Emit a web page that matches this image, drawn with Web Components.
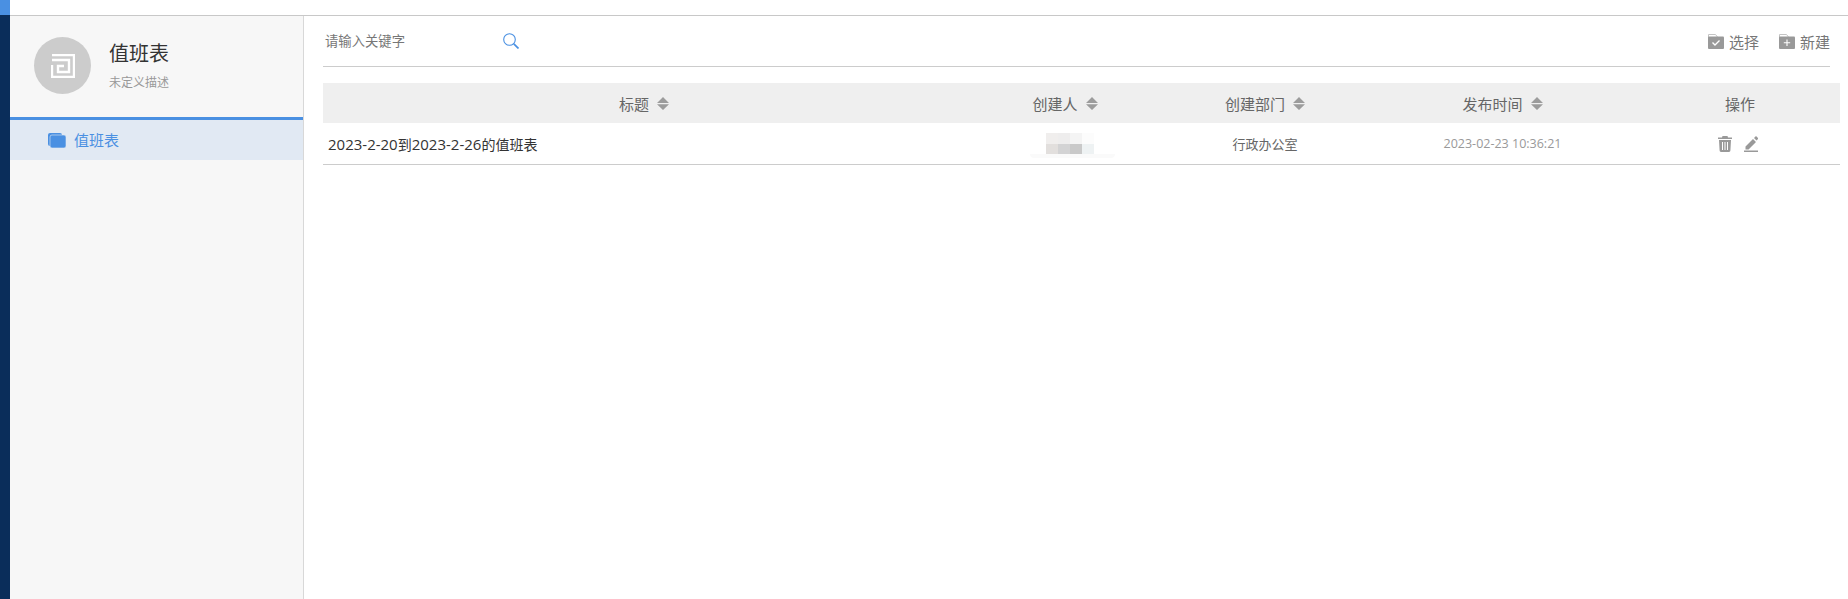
<!DOCTYPE html>
<html lang="zh">
<head>
<meta charset="utf-8">
<title>值班表</title>
<style>
  html, body { margin: 0; height: 100%; overflow: hidden; background: #fff; }
  body { font-family: "Open Sans", "Noto Sans CJK SC", sans-serif; }
</style>
</head>
<body>
<duty-app></duty-app>

<script>
const appTemplate = document.createElement('template');
appTemplate.innerHTML = `
  <style>
    :host { display: flex; height: 599px; }
    .strip { width: 10px; flex: none; background: #0a2d5a; }
    .strip div { height: 15px; background: #4a90e2; }
    .main { flex: 1; display: flex; flex-direction: column; min-width: 0; }
    .top { height: 15px; flex: none; border-bottom: 1px solid #c8c8c8; }
    .body { flex: 1; display: flex; min-height: 0; }
  </style>
  <div class="strip"><div></div></div>
  <div class="main">
    <div class="top"></div>
    <div class="body">
      <duty-sidebar></duty-sidebar>
      <duty-content></duty-content>
    </div>
  </div>
`;

class DutyApp extends HTMLElement {
  connectedCallback() {
    this.attachShadow({ mode: 'open' }).appendChild(appTemplate.content.cloneNode(true));
  }
}

const sidebarTemplate = document.createElement('template');
sidebarTemplate.innerHTML = `
  <style>
    :host { display: block; width: 293px; flex: none; background: #f7f7f7; border-right: 1px solid #d8d8d8; }
    .head { height: 104px; box-sizing: border-box; display: flex; padding: 21px 0 0 24px; border-bottom: 3px solid #4a90e2; }
    .logo { width: 57px; height: 57px; border-radius: 50%; background: #cccccc; display: flex; align-items: center; justify-content: center; flex: none; }
    .info { margin-left: 18px; padding-top: 2px; }
    h1 { margin: 0; font-size: 20px; font-weight: 400; line-height: 30px; color: #333; }
    p { margin: 6px 0 0; font-size: 12px; line-height: 16px; color: #999; }
    .item { height: 40px; background: #e1e9f3; display: flex; align-items: center; padding-left: 38px; color: #4a90e2; font-size: 15px; line-height: 38px; }
    .item svg { margin-right: 8px; }
  </style>
  <div class="head">
    <div class="logo">
      <svg width="24" height="24" viewBox="0 0 24 24" fill="none" stroke="#fff" stroke-width="2.400">
        <path d="M1 1h22v22H1V11M1 6h17v12H7v-6h6"/>
      </svg>
    </div>
    <div class="info">
      <h1>值班表</h1>
      <p>未定义描述</p>
    </div>
  </div>
  <div class="item">
    <svg width="18" height="15" viewBox="0 0 18 15">
      <rect x="0" y="0" width="14" height="13" rx="2" fill="#4a90e2"/>
      <rect x="2" y="2" width="16" height="13" rx="2" fill="#4a90e2" stroke="#e1e9f3" stroke-width=".6"/>
    </svg>
    值班表
  </div>
`;

class DutySidebar extends HTMLElement {
  connectedCallback() {
    this.attachShadow({ mode: 'open' }).appendChild(sidebarTemplate.content.cloneNode(true));
  }
}

const folderBody = `
  <path d="M.5 4V.5h7l2 2.500" fill="none" stroke="#c4c4c4"/>
  <rect x="0" y="2.500" width="16" height="12.500" rx="1" fill="#999"/>`;

const toolbarTemplate = document.createElement('template');
toolbarTemplate.innerHTML = `
  <style>
    :host { display: flex; align-items: center; height: 50px; margin-right: 10px; border-bottom: 1px solid #ccc; font-size: 13.330px; }
    .kw { width: 178px; padding-left: 2px; color: #777; line-height: 50px; height: 50px; }
    .actions { margin-left: auto; display: flex; gap: 20px; color: #777; font-size: 15px; }
    .actions span { display: flex; align-items: center; gap: 5px; }
  </style>
  <span class="kw">请输入关键字</span>
  <svg width="16" height="16" viewBox="0 0 16 16" fill="none" stroke="#4a90e2" stroke-width="1.100"><circle cx="6.500" cy="6.500" r="5.800"/><path d="M10.800 10.800L15.500 15.500" stroke-width="1.700"/></svg>
  <div class="actions">
    <span>
      <svg width="16" height="15" viewBox="0 0 16 15">${folderBody}<path d="M4.500 8.500l2.500 2.500 4.500-4.500" fill="none" stroke="#fff" stroke-width="1.400"/></svg>
      选择
    </span>
    <span>
      <svg width="16" height="15" viewBox="0 0 16 15">${folderBody}<path d="M8 5.500v6.500M4.800 8.700h6.400" fill="none" stroke="#fff" stroke-width="1.100"/></svg>
      新建
    </span>
  </div>
`;

class DutyToolbar extends HTMLElement {
  connectedCallback() {
    this.attachShadow({ mode: 'open' }).appendChild(toolbarTemplate.content.cloneNode(true));
  }
}

const sortTemplate = document.createElement('template');
sortTemplate.innerHTML = `
  <style>
    :host { display: inline-flex; margin-left: 8px; }
  </style>
  <svg width="12" height="13" viewBox="0 0 12 13"><path d="M6 0l6 6H0zM6 13L0 7.200h12z" fill="#9c9c9c"/></svg>
`;

class SortIcon extends HTMLElement {
  connectedCallback() {
    this.attachShadow({ mode: 'open' }).appendChild(sortTemplate.content.cloneNode(true));
  }
}

const tableTemplate = document.createElement('template');
tableTemplate.innerHTML = `
  <style>
    :host { display: block; margin-top: 16px; }
    .row { display: grid; grid-template-columns: 642px 200px 200px 275px 200px; align-items: center; }
    .hd { height: 40px; background: #efefef; color: #666; font-size: 15px; }
    .hd > div { display: flex; align-items: center; justify-content: center; }
    .bd { height: 41px; border-bottom: 1px solid #ccc; font-size: 13px; color: #666; text-align: center; }
    .title { text-align: left; padding-left: 5px; color: #333; font-size: 14px; }
    .title span { font-size: 15px; }
    .time { color: #999; font-size: 12.500px; }
    .who { align-self: start; padding-top: 10px; }
    .mosaic { display: grid; grid-template-columns: repeat(4, 12px); grid-auto-rows: 10.500px; margin-left: 81px; }
    .mosaic i { display: block; }
    .smudge { width: 85px; height: 4px; margin-left: 65px; background: #fafafa; border-radius: 0 0 20px 20px; }
    .ops { display: flex; align-items: center; justify-content: center; gap: 12px; padding-right: 4px; }
  </style>
  <div class="row hd">
    <div>标题<sort-icon></sort-icon></div>
    <div>创建人<sort-icon></sort-icon></div>
    <div>创建部门<sort-icon></sort-icon></div>
    <div>发布时间<sort-icon></sort-icon></div>
    <div>操作</div>
  </div>
  <div class="row bd">
    <div class="title"><span>2023-2-20</span>到<span>2023-2-26</span>的值班表</div>
    <div class="who">
      <div class="mosaic">
        <i style="background:#f0eeed"></i><i style="background:#eeeded"></i><i style="background:#f4f4f4"></i><i style="background:#fcfcfc"></i>
        <i style="background:#e2dfdd"></i><i style="background:#d3d3d4"></i><i style="background:#c9c9c9"></i><i style="background:#eef2f3"></i>
      </div>
      <div class="smudge"></div>
    </div>
    <div>行政办公室</div>
    <div class="time">2023-02-23 10:36:21</div>
    <div class="ops">
      <svg width="14" height="16" viewBox="0 0 14 16" fill="#999"><path d="M4.500 0h5l.5 1.500h4V3H0V1.500h4zM1 4h12l-.6 10.500A1.500 1.500 0 0 1 11 16H3a1.500 1.500 0 0 1-1.400-1.500z"/><path d="M4.500 6v8M7 6v8M9.500 6v8" stroke="#fff" stroke-width="1"/></svg>
      <svg width="14" height="16" viewBox="0 0 14 16" fill="#999"><path d="M1.500 10.500L9 3l3 3-7.500 7.500h-3zM10 2l2-2 2.500 2.500-2 2z"/><path d="M0 14.500h14V16H0z"/></svg>
    </div>
  </div>
`;

class DutyTable extends HTMLElement {
  connectedCallback() {
    this.attachShadow({ mode: 'open' }).appendChild(tableTemplate.content.cloneNode(true));
  }
}

const contentTemplate = document.createElement('template');
contentTemplate.innerHTML = `
  <style>
    :host { display: block; flex: 1; min-width: 0; padding-left: 19px; padding-right: 8px; }
  </style>
  <duty-toolbar></duty-toolbar>
  <duty-table></duty-table>
`;

class DutyContent extends HTMLElement {
  connectedCallback() {
    this.attachShadow({ mode: 'open' }).appendChild(contentTemplate.content.cloneNode(true));
  }
}

customElements.define('sort-icon', SortIcon);
customElements.define('duty-toolbar', DutyToolbar);
customElements.define('duty-table', DutyTable);
customElements.define('duty-content', DutyContent);
customElements.define('duty-sidebar', DutySidebar);
customElements.define('duty-app', DutyApp);
</script>
</body>
</html>
